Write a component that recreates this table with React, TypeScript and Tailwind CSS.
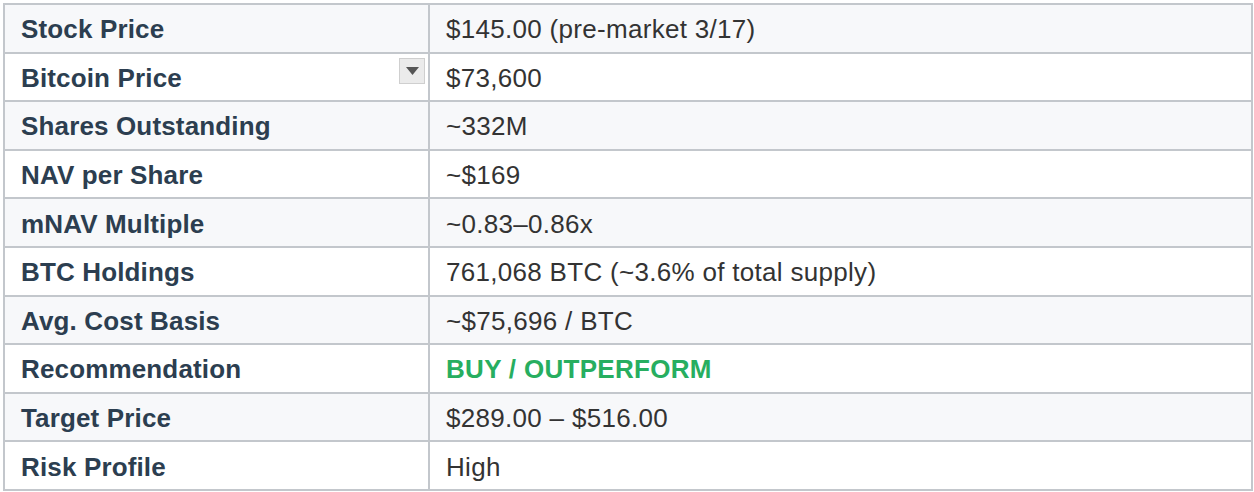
import React from "react";

type Row = { label: string; value: string; accent?: boolean; menu?: boolean };

const rows: Row[] = [
  { label: "Stock Price", value: "$145.00 (pre-market 3/17)" },
  { label: "Bitcoin Price", value: "$73,600", menu: true },
  { label: "Shares Outstanding", value: "~332M" },
  { label: "NAV per Share", value: "~$169" },
  { label: "mNAV Multiple", value: "~0.83–0.86x" },
  { label: "BTC Holdings", value: "761,068 BTC (~3.6% of total supply)" },
  { label: "Avg. Cost Basis", value: "~$75,696 / BTC" },
  { label: "Recommendation", value: "BUY / OUTPERFORM", accent: true },
  { label: "Target Price", value: "$289.00 – $516.00" },
  { label: "Risk Profile", value: "High" },
];

export default function App() {
  return (
    <div className="bg-white w-[1254px] h-[492px] pt-[3px] pl-[3px] font-['Liberation_Sans',Arial,sans-serif]">
      <div className="w-[1250px] border-2 border-[#c3c7cc]">
        {rows.map((r, i) => (
          <div
            key={r.label}
            className={`grid grid-cols-[425px_1fr] ${i < rows.length - 1 ? "h-[48.6px] border-b-2 border-[#c3c7cc]" : "h-[46.6px]"} ${i % 2 === 0 ? "bg-[#f7f8fa]" : "bg-white"}`}
          >
            <div className="relative flex items-center pl-[16px] pt-[3px] border-r-2 border-[#c3c7cc] text-[26px] font-bold tracking-[0.15px] text-[#2c3e50]">
              {r.label}
              {r.menu && (
                <span className="absolute right-[3px] top-[4px] w-[26px] h-[26px] flex items-center justify-center bg-[#ebebeb] border border-[#cfcfcf]">
                  <svg width="13" height="8" viewBox="0 0 13 8">
                    <path d="M0 0 L13 0 L6.5 8 Z" fill="#555" />
                  </svg>
                </span>
              )}
            </div>
            <div
              className={`flex items-center pl-[16px] pt-[3px] text-[26px] tracking-[0.3px] ${r.accent ? "font-bold text-[#27ae60]" : "text-[#333]"}`}
            >
              {r.value}
            </div>
          </div>
        ))}
      </div>
    </div>
  );
}
